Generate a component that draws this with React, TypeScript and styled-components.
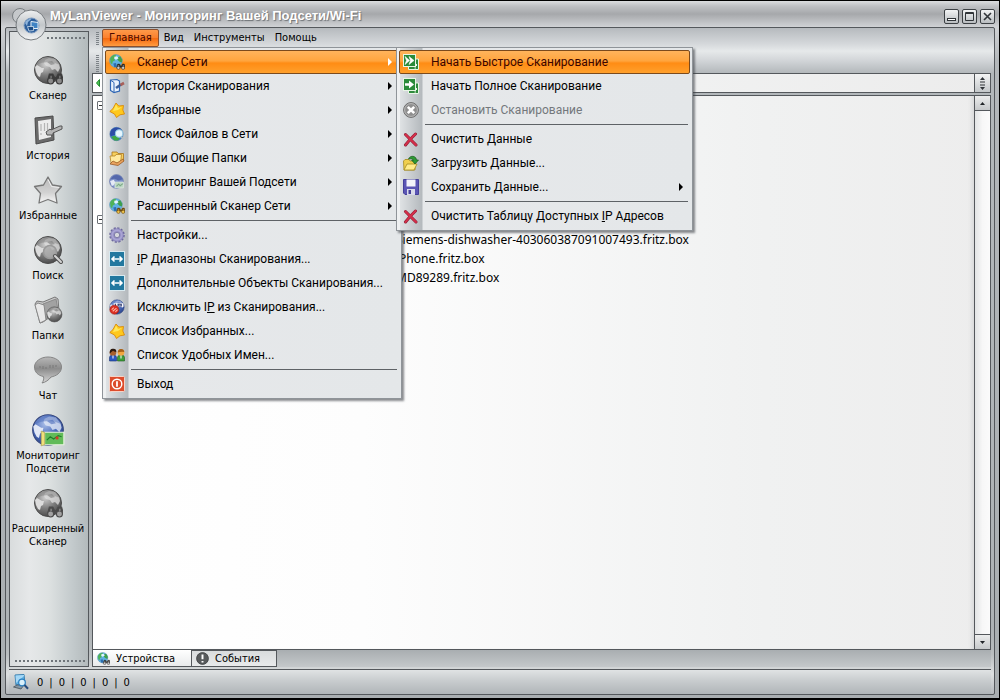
import React, { ReactNode } from 'react';
import styled, { createGlobalStyle, css } from 'styled-components';

const tahoma = `'DejaVu Sans Condensed', 'DejaVu Sans', sans-serif`;
const segoe = `Roboto, 'Noto Sans', sans-serif`;
const line = '#54585c';

const GlobalStyle = createGlobalStyle`
  * { box-sizing: border-box; }
  body { margin: 0; background: #000; font-family: ${tahoma}; font-size: 11px; color: #000; }
  button, input { font: inherit; color: inherit; margin: 0; }
  ul { list-style: none; margin: 0; padding: 0; }
  svg { display: block; flex: none; }
`;

/* ---------- window frame ---------- */

const Window = styled.div`
  display: flex;
  flex-direction: column;
  min-height: 100vh;
  border: 1px solid #000;
  border-bottom-width: 2px;
  padding: 0 4px 3px;
  background: linear-gradient(#dcdee0 0, #bfc1c4 5px, #a6a8ab 13px, #d0d2d5 26px, #b4b8bb 60px, #a9aeb1 100%);
`;

const TitleBar = styled.header`
  position: relative;
  display: flex;
  align-items: center;
  height: 26px;
  padding: 4px 0 0 45px;
`;

const Title = styled.h1`
  flex: 1;
  margin: 0;
  font: bold 13px/20px 'Liberation Sans', Arial, sans-serif;
  color: #fff;
  text-shadow: 1px 1px 1px #6d7175;
`;

const Logo = styled.svg`
  position: absolute;
  left: 1px;
  top: 4px;
  z-index: 2;
`;

const WindowButtons = styled.div`
  display: flex;
  gap: 3px;
`;

const WindowButton = styled.button`
  width: 15px;
  height: 15px;
  padding: 0;
  border: 1px solid #3c4044;
  border-radius: 2px;
  background: linear-gradient(#f2f3f4, #b9bdc0);
`;

const Frame = styled.div`
  flex: 1;
  display: flex;
  flex-direction: column;
  padding: 0 3px;
  border: 1px solid ${line};
  border-radius: 2px;
  background: linear-gradient(#b6babe 0, #d5d8db 16px, #e6e9ea 23px, #d3d6d9 32px, #b3b8bb 45px, #adb2b5 90%, #b9bdbf 94%, #dde0e1 97%, #b4b8bc 100%);
`;

const Body = styled.div`
  flex: 1;
  display: flex;
  gap: 3px;
`;

/* ---------- sidebar ---------- */

const Sidebar = styled.nav`
  display: flex;
  flex-direction: column;
  width: 80px;
  margin: 3px 0 2px;
  padding: 5px 2px 4px 5px;
  border: 1px solid ${line};
  background: linear-gradient(90deg, #d9dcdd, #e6e8e9 25%, #dde1e1 50%, #c3cacc 80%, #b3babc);
`;

const Dots = styled.div<{ $inset?: boolean }>`
  height: 2px;
  margin-left: ${p => (p.$inset ? '32px' : '0')};
  background: repeating-linear-gradient(90deg, #6f757a 0 2px, transparent 2px 4px);
`;

const SideList = styled.ul`
  flex: 1;
  margin: 13px 0 0 -5px;
`;

const SideButton = styled.button`
  display: flex;
  flex-direction: column;
  align-items: center;
  gap: 4px;
  width: 100%;
  padding: 3px 0 10px;
  border: 0;
  background: none;
  line-height: 13px;
  white-space: pre;
`;

const SideIcon = styled.span`
  display: flex;
  align-items: center;
  justify-content: center;
  width: 30px;
  height: 30px;
`;

/* ---------- main area ---------- */

const Main = styled.main`
  flex: 1;
  min-width: 0;
  display: flex;
  flex-direction: column;
  padding-bottom: 2px;
`;

const MenuBar = styled.div`
  display: flex;
  align-items: flex-start;
  height: 22px;
  padding: 1px 0 0 4px;
`;

const Toolbar = styled.div`
  height: 23px;
  padding: 2px 0 0 4px;
`;

const Grip = styled.span<{ $tall?: boolean }>`
  width: 3px;
  display: block;
  height: ${p => (p.$tall ? '18px' : '14px')};
  margin: 3px 3px 0 0;
  background: repeating-linear-gradient(#7c8287 0 1px, transparent 1px 2px);
`;

const MenuAnchor = styled.div`
  position: relative;
`;

const BarButton = styled.button<{ $open?: boolean }>`
  height: 18px;
  padding: 0 4px;
  border: 1px solid transparent;
  border-radius: 2px;
  background: none;
  line-height: 16px;
  ${p =>
    p.$open &&
    css`
      padding: 0 6px;
      border-color: #8a5030;
      color: #4a0800;
      background: linear-gradient(#ff9a4a, #fb7f2c 50%, #f56a10 52%, #ff9b40);
    `}
`;

const Menu = styled.ul<{ $sub?: boolean }>`
  position: absolute;
  z-index: ${p => (p.$sub ? 4 : 3)};
  left: ${p => (p.$sub ? '291px' : '0')};
  top: ${p => (p.$sub ? '-3px' : '18px')};
  width: ${p => (p.$sub ? '297px' : '300px')};
  padding: 2px;
  border: 1px solid #8f9499;
  background: linear-gradient(90deg, #eef0f1 0 3px, #dfe2e4 3px, #b4b9bd 25px, #e6e8ea 26px, #e4e7e9);
  box-shadow: 2px 2px 2px rgba(60, 64, 68, 0.6);
`;

const MenuRow = styled.li`
  position: relative;
`;

const MenuButton = styled.button<{ $active?: boolean }>`
  display: flex;
  align-items: center;
  gap: 12px;
  width: 100%;
  height: 24px;
  padding: 0 6px 0 3px;
  border: 1px solid transparent;
  border-radius: 2px;
  background: none;
  font-family: ${segoe};
  font-size: 12px;
  line-height: 22px;
  text-align: left;
  white-space: nowrap;
  &:disabled { color: #74787c; }
  ${p =>
    p.$active &&
    css`
      border-color: #7b4a1c;
      color: #3a0500;
      background: linear-gradient(#ffb45c, #ffa53e 45%, #ff8c14 55%, #ffa02c);
    `}
`;

const MenuText = styled.span`
  flex: 1;
`;

const Separator = styled.li`
  height: 5px;
  margin: 0 2px 0 26px;
  background: linear-gradient(transparent 2px, #5e6266 2px 3px, transparent 3px);
`;

const Address = styled.div`
  display: flex;
  height: 20px;
  margin-bottom: 2px;
  border: 1px solid ${line};
  background: linear-gradient(90deg, #fff, #f1f2f2 60%, #ececec);
`;

const AddressInput = styled.input`
  flex: 1;
  min-width: 0;
  border: 0;
  background: none;
  outline: none;
`;

const BarTool = styled.button<{ $wide?: boolean }>`
  display: flex;
  align-items: center;
  justify-content: center;
  width: ${p => (p.$wide ? '16px' : '9px')};
  padding: 0;
  border: 0;
  background: none;
  ${p => p.$wide && `border-left: 1px solid ${line}; background: linear-gradient(#f4f5f5, #c4c8ca);`}
`;

const ViewRow = styled.div`
  flex: 1;
  display: flex;
  border: 1px solid ${line};
  background: linear-gradient(90deg, #fff, #fdfdfd 30%, #f0f1f1 75%, #ededed);
`;

const Tree = styled.ul`
  flex: 1;
  min-width: 0;
  overflow: hidden;
  padding-left: 4px;
  box-shadow: inset -5px 0 4px -3px #d4d6d7;
`;

const TreeRow = styled.li<{ $child?: boolean }>`
  display: flex;
  align-items: center;
  height: 19px;
  padding: ${p => (p.$child ? '2px 0 0 299px' : '0')};
  white-space: nowrap;
  font-family: 'Noto Sans', 'Open Sans', sans-serif;
  font-size: 12px;
`;

const Expander = styled.button`
  width: 9px;
  height: 9px;
  padding: 0;
  border: 1px solid #6b7075;
  border-radius: 1px;
  background: linear-gradient(#333, #333) center / 5px 1px no-repeat, #fff;
`;

const ScrollBar = styled.div`
  display: flex;
  flex-direction: column;
  justify-content: space-between;
  width: 16px;
  border-left: 1px solid ${line};
  background: linear-gradient(90deg, #e2e4e5, #f7f7f7 50%, #fbfbfb);
`;

const ScrollButton = styled.button<{ $down?: boolean }>`
  display: flex;
  align-items: center;
  justify-content: center;
  height: 15px;
  padding: 0;
  border: 0 solid ${line};
  border-width: ${p => (p.$down ? '1px 0 0' : '0 0 1px')};
  background: linear-gradient(#eceded, #c6c9cb);
`;

const Tabs = styled.div`
  display: flex;
  height: 17px;
  background: linear-gradient(#a9aeb1, #c4c8ca);
`;

const Tab = styled.button<{ $active?: boolean }>`
  display: flex;
  align-items: center;
  gap: 6px;
  width: ${p => (p.$active ? '100px' : '86px')};
  padding: 0 4px;
  border: 1px solid ${line};
  border-top-width: ${p => (p.$active ? '0' : '1px')};
  margin-left: ${p => (p.$active ? '0' : '-1px')};
  background: ${p => (p.$active ? 'linear-gradient(#fff, #e9ebec)' : 'linear-gradient(#d9dcdd, #e8eaeb)')};
  line-height: 15px;
`;

const StatusBar = styled.footer`
  display: flex;
  align-items: center;
  gap: 8px;
  height: 25px;
  padding: 0 4px;
  border-top: 1px solid ${line};
  background: linear-gradient(#e0e3e4, #c8ccce 45%, #b0b5b8);
`;

const Counters = styled.span`
  display: flex;
  gap: 6px;
`;

/* ---------- icons ---------- */

type Tone = 'gray' | 'color' | 'blue';
const tones: Record<Tone, { hi: string; sea: string; deep: string; land: string; edge: string }> = {
  gray: { hi: '#cfcfcf', sea: '#7c7c7c', deep: '#3e3e3e', land: '#dcdcdc', edge: '#4c4c4c' },
  color: { hi: '#c4e8fb', sea: '#4da3dc', deep: '#2560a4', land: '#52b455', edge: '#5a93ae' },
  blue: { hi: '#a9bde8', sea: '#4c6cba', deep: '#223a80', land: '#e2e8f6', edge: '#34457c' },
};

const Globe = ({ tone, id }: { tone: Tone; id: string }) => {
  const t = tones[tone];
  return (
    <>
      <defs>
        <radialGradient id={id} cx="0.4" cy="0.3" r="0.8">
          <stop offset="0" stopColor={t.hi} />
          <stop offset="0.5" stopColor={t.sea} />
          <stop offset="1" stopColor={t.deep} />
        </radialGradient>
      </defs>
      <circle cx="15" cy="15" r="13.5" fill={`url(#${id})`} stroke={t.edge} />
      <path d="M2 12 L4 10 9 13 11 13 10 17 8 18 7 22 5 21 3 17Z" fill={t.land} />
      <path d="M12 5 L16 3 22 4 26 9 27 13 25 17 22 14 19 15 17 12 13 11 11 8Z" fill={t.land} opacity="0.8" />
      <path d="M14 7 L19 6 22 9 18 10Z" fill={t.sea} opacity="0.6" />
      <path d="M3 10 Q8 2 16 2 Q24 3 27 10 Q15 4 3 10Z" fill={t.sea} opacity="0.45" />
    </>
  );
};

/* Small menu-size globe: fewer, larger land masses so that it reads at 16px. */
const MiniGlobe = () => (
  <>
    <circle cx="13" cy="13" r="12" fill="#5fb0e2" stroke="#5a93ae" />
    <path d="M2 9 Q5 2 12 1.500 L14 5 L10 8 L11 12 L7 14 L6 19 L3 17Z" fill="#4fb257" />
    <path d="M16 6 L21 4 L25 11 L24 16 L19 14 L16 11Z" fill="#3f9f4b" />
    <path d="M8 18 L13 17 L15 24 L10 25Z" fill="#2e6db0" />
    <path d="M10 5 L15 4 L18 8 L13 11 L10 9Z" fill="#e2f5ff" />
  </>
);

const Binoculars = ({ a = '#2b2b2b', b = '#c9c9c9' }: { a?: string; b?: string }) => (
  <g stroke={a} strokeWidth="1.2" transform="translate(4 4) scale(0.880)">
    <path d="M14 17 h4 l2 4 h2 l2 -4 h4 l2 8 h-7 l-1 -2 h-2 l-1 2 h-7Z" fill={a} />
    <circle cx="15.5" cy="25" r="3.4" fill={b} />
    <circle cx="25.5" cy="25" r="3.4" fill={b} />
    <path d="M16 19 v3 M26 19 v3" stroke={b} />
  </g>
);

const Svg = ({ size = 16, box = 30, children }: { size?: number; box?: number; children: ReactNode }) => (
  <svg width={size} height={size} viewBox={`0 0 ${box} ${box}`} aria-hidden="true">
    {children}
  </svg>
);

const GlobeScan = ({ id, size, tone = 'color', a, b }: { id: string; size?: number; tone?: Tone; a?: string; b?: string }) => (
  <Svg size={size}>
    {tone === 'color' ? <MiniGlobe /> : <Globe tone={tone} id={id} />}
    <Binoculars a={a} b={b} />
  </Svg>
);

const SideHistory = () => (
  <Svg size={30}>
    <path d="M2 3 L20 1 L21 25 L3 29Z" fill="#6a6a6a" stroke="#4a4a4a" />
    <path d="M5 6 L18 4 L18 22 L6 25Z" fill="#ececec" />
    <path d="M8 9v7M8 18v2M11.500 8v8M14.500 8v7" stroke="#b4b4b4" fill="none" strokeWidth="1.200" />
    <path d="M13 17 L17 14 18 15 27 11 29 11 29 14 20 18 20 20 14 20Z" fill="#b5b5b5" stroke="#555" />
  </Svg>
);

const SideStar = () => (
  <Svg size={30}>
    <defs>
      <linearGradient id="star" x2="0" y2="1">
        <stop stopColor="#b8b8b8" />
        <stop offset="0.6" stopColor="#d2d2d2" />
        <stop offset="1" stopColor="#f7f7f7" />
      </linearGradient>
    </defs>
    <path d="M15 2 L19.500 10 L28.500 11.500 L22.500 18.500 L24 28 L15 24.500 L6 28 L7.500 18.500 L1.500 11.500 L10.500 10Z" fill="url(#star)" stroke="#777" strokeWidth="1.300" strokeLinejoin="round" />
    <path d="M15 4.500 L18.500 11.500 L26 12.500" fill="none" stroke="#eee" />
  </Svg>
);

const SideSearch = () => (
  <Svg size={30}>
    <Globe tone="gray" id="g-search" />
    <circle cx="17" cy="17" r="6.5" fill="#b2b2b2" fillOpacity="0.8" stroke="#999" strokeWidth="1.5" />
    <path d="M22 21 L28 27" stroke="#555" strokeWidth="4" strokeLinecap="round" />
    <path d="M22 21 L28 27" stroke="#d5d5d5" strokeWidth="2" strokeLinecap="round" />
  </Svg>
);

const SideFolders = () => (
  <Svg size={30}>
    <path d="M2 9 L4 6 L10 7 L22 2 L25 4 L26 16 L10 27 L7 28Z" fill="#c9c9c9" stroke="#777" />
    <path d="M10 9 L23 4 L25 15 L13 24Z" fill="#a2a2a2" stroke="#8a8a8a" />
    <path d="M2 10 L5 8 L11 10 L13 25 L7 28Z" fill="#e8e8e8" stroke="#888" />
    <g transform="translate(13 11) scale(0.56)">
      <Globe tone="gray" id="g-folder" />
    </g>
  </Svg>
);

const SideChat = () => (
  <Svg size={30}>
    <defs>
      <linearGradient id="chat" x2="0" y2="1">
        <stop stopColor="#b8b8b8" />
        <stop offset="0.45" stopColor="#8c8c8c" />
        <stop offset="1" stopColor="#d6d6d6" />
      </linearGradient>
    </defs>
    <path d="M15 2 C22.500 2 28.500 6.500 28.500 12 C28.500 18 23 21 18 22 C16 25 12 27.500 9 28 C10.500 26 11 24 10.500 21.500 C5 20.500 1.500 17 1.500 12 C1.500 6.500 7.500 2 15 2Z" fill="url(#chat)" stroke="#858585" />
    <path d="M7 11v2M10 11v3M13 12v2M17 10v3M20 10v3M23 10v2" stroke="#7b7b7b" strokeWidth="1.100" />
  </Svg>
);

const SideMonitor = () => (
  <Svg size={34}>
    <Globe tone="blue" id="g-monitor" />
    <path d="M12 17 h17 v11 h-17Z" fill="#62bb59" stroke="#e6f3dc" />
    <path d="M14 24 l3 -3 3 2 4 -3 3 1" stroke="#1f7d2b" fill="none" />
    <circle cx="23" cy="22" r="1.400" fill="#d43a2a" />
    <path d="M9 16 l3 1 v11 l-3 1Z" fill="#f0e07a" stroke="#9d9140" strokeWidth="0.500" />
  </Svg>
);

const HistoryIcon = () => (
  <Svg box={16}>
    <path d="M1.500 2 L8 1.500 L10.500 3 V13 L5 14.500 L1.500 12.500Z" fill="#eaf3fc" stroke="#2f66b4" strokeWidth="1.200" />
    <path d="M2 2.500 L5 4.500 V14" fill="none" stroke="#2f66b4" />
    <path d="M7 10 L12 6.500" stroke="#3a5f9a" strokeWidth="2.600" />
    <path d="M11.500 7 L15 5" stroke="#a8605a" strokeWidth="2.600" />
  </Svg>
);

const StarIcon = () => (
  <Svg box={16}>
    <path d="M7 1 L9.800 4 L14.500 3.500 L13.800 8 L15.500 12 L11 12.800 L7.500 15.500 L5.500 12 L0.800 9.500 L4 6.500Z" fill="#ffc81c" stroke="#d98a08" strokeWidth="0.900" strokeLinejoin="round" />
    <path d="M7 2.500 L9 6 L13 5 L9 8 L4 9Z" fill="#ffe75a" />
  </Svg>
);

const SearchGlobe = () => (
  <Svg>
    <circle cx="14" cy="15" r="12.500" fill="#3f86cc" stroke="#4a6fa0" />
    <path d="M3 10 Q7 3 14 3 Q20 3 24 6 L13 9 L11 17 L3 19 Q1 15 3 10Z" fill="#2d4da6" />
    <path d="M4 20 L12 18 L20 23 L17 27 L10 27Z" fill="#3fa844" />
    <circle cx="19" cy="14" r="7" fill="#e6f6fd" stroke="#8fc4e0" strokeWidth="2" />
    <path d="M23 20 L27 25" stroke="#b5bcc2" strokeWidth="3" />
  </Svg>
);

const FoldersIcon = () => (
  <Svg box={16}>
    <path d="M3 2 H8 L9 3.500 H14.500 V11 H3Z" fill="#f6cf5e" stroke="#a8741c" strokeWidth="0.800" />
    <path d="M1 6 H6 L7 4.500 H12.500 L11.500 13 H2Z" fill="#ffe9a0" stroke="#b88526" strokeWidth="0.800" />
    <path d="M1 14 L4 11 L8 13 L14 9 L15 11 L9 15.500Z" fill="#e9a35e" stroke="#90511d" strokeWidth="0.700" />
  </Svg>
);

const MonitorIcon = () => (
  <Svg>
    <circle cx="14" cy="14" r="13" fill="#7c90c8" stroke="#5a6aa0" />
    <path d="M3 10 Q7 2 15 2 Q22 3 26 10 L18 12 L10 9Z" fill="#5468ac" />
    <path d="M2 13 L9 11 L12 16 L8 22 L5 22Z" fill="#e4e9f6" />
    <path d="M11 15 h16 v11 h-16Z" fill="#bcd6c4" stroke="#eef6ea" />
    <path d="M14 23 l4 -4 3 3 5 -4" stroke="#7cab86" fill="none" strokeWidth="2" />
  </Svg>
);

const GearIcon = () => (
  <Svg box={16}>
    <circle cx="8" cy="8" r="6.600" fill="none" stroke="#6d689c" strokeWidth="2.400" strokeDasharray="2.100 1.360" />
    <circle cx="8" cy="8" r="4.700" fill="none" stroke="#8f8abf" strokeWidth="4" />
    <circle cx="8" cy="8" r="4.700" fill="none" stroke="#a9a4d4" strokeWidth="2" />
    <circle cx="8" cy="8" r="2.700" fill="#d5d7dc" stroke="#6d689c" strokeWidth="0.800" />
  </Svg>
);

const RangeIcon = () => (
  <Svg box={16}>
    <rect x="0.500" y="0.500" width="15" height="15" fill="#23789f" stroke="#d8e9ef" />
    <path d="M3 8 H13 M5.500 5.500 L3 8 L5.500 10.500 M10.500 5.500 L13 8 L10.500 10.500" fill="none" stroke="#fff" strokeWidth="1.600" />
  </Svg>
);

const ExcludeIcon = () => (
  <Svg>
    <Globe tone="blue" id="m-exclude" />
    <path d="M9 8 H27 V15 H9Z" fill="#f4f5fa" />
    <path d="M12 9 v5 M17 14 v-4 h6 v3 h-5" stroke="#303c70" strokeWidth="2" fill="none" />
    <circle cx="10" cy="20" r="8.500" fill="#dc2f22" stroke="#97160e" />
    <path d="M5 20 L9 16 M7 23 L14 17 M12 24 L16 20" stroke="#ffb7a8" strokeWidth="2" />
  </Svg>
);

const PeopleIcon = () => (
  <Svg box={16}>
    <path d="M0.500 14 V10.500 Q0.500 8 4 8 Q7.500 8 7.500 10.500 V14Z" fill="#2b57c0" stroke="#1a3272" strokeWidth="0.600" />
    <path d="M8.500 14 V10.500 Q8.500 8 12 8 Q15.500 8 15.500 10.500 V14Z" fill="#3e9e3a" stroke="#1d5a1c" strokeWidth="0.600" />
    <circle cx="4" cy="5.500" r="3.300" fill="#a9602c" />
    <path d="M0.700 6.500 Q0.500 1.500 4 1.800 Q7.500 1.500 7.300 5 Q5 4.500 4 3.800 Q2.500 5 0.700 6.500" fill="#2b1a10" />
    <circle cx="12" cy="5.500" r="3.300" fill="#f2a640" />
    <path d="M8.700 5.500 Q9 1.800 12 2 Q15 1.800 15.300 5 Q12 4.500 8.700 5.500" fill="#a5601a" />
    <path d="M4 8.500v3M12 8.500v3" stroke="#fff" />
  </Svg>
);

const ExitIcon = () => (
  <Svg box={16}>
    <rect x="0.500" y="0.500" width="15" height="15" rx="1" fill="#dd4c2c" stroke="#f6d2c6" />
    <circle cx="8" cy="8" r="4.800" fill="none" stroke="#fff" strokeWidth="1.400" />
    <path d="M8 5.200v5.600" stroke="#fff" strokeWidth="1.800" />
  </Svg>
);

const StartIcon = ({ fast }: { fast?: boolean }) => (
  <Svg box={16}>
    <path d="M13 5 H15.500 V15.500 H5.500 V13" fill="#2f8b3d" stroke="#e8f6e6" />
    <path d="M13 14 h-1.500 M13.500 12 v-2" stroke="#e8f6e6" />
    <rect x="0.500" y="0.500" width="12" height="12" fill="#2a8b3a" stroke="#e8f6e6" />
    {fast ? (
      <path d="M2 2.500 L6.500 6.500 L2 10.500 L3.500 6.500Z M6 2.500 L11 6.500 L6 10.500 L7.500 6.500Z" fill="#fff" stroke="#fff" strokeWidth="0.600" />
    ) : (
      <path d="M2 5.300 H6 V2.500 L11 6.500 L6 10.500 V7.700 H2Z" fill="#fff" />
    )}
  </Svg>
);

const StopIcon = () => (
  <Svg box={16}>
    <circle cx="8" cy="8" r="7.400" fill="#8f8f8f" stroke="#6f6f6f" />
    <circle cx="8" cy="8" r="6.400" fill="none" stroke="#c4c4c4" strokeWidth="0.800" />
    <path d="M4.800 4.800 L11.200 11.200 M11.200 4.800 L4.800 11.200" stroke="#fff" strokeWidth="2.600" />
  </Svg>
);

const ClearIcon = () => (
  <Svg box={16}>
    <path d="M2.500 3.500 L13 14 M12.500 3 Q7 8 2.500 14" fill="none" stroke="#8a1d33" strokeWidth="3" strokeLinecap="round" />
    <path d="M2.500 3.500 L13 14 M12.500 3 Q7 8 2.500 14" fill="none" stroke="#d42f4a" strokeWidth="2" strokeLinecap="round" />
  </Svg>
);

const LoadIcon = () => (
  <Svg box={16}>
    <path d="M0.500 6 L2 4.500 H6 L7 6 H12 V15 H1Z" fill="#f0cf4e" stroke="#a58a1c" strokeWidth="0.800" />
    <path d="M1 15 L4 9 H14 L11 15Z" fill="#ffec8a" stroke="#a58a1c" strokeWidth="0.800" />
    <path d="M5.500 4 Q7 0.500 11 1.500 Q13.500 2.500 13.500 5 H15.500 L12 9 L8.500 5 H10.500 Q9.500 3 5.500 4Z" fill="#2f9a34" stroke="#155a1a" strokeWidth="0.700" />
  </Svg>
);

const SaveIcon = () => (
  <Svg box={16}>
    <path d="M0.500 0.500 H15.500 V15.500 H2 L0.500 14Z" fill="#5a55b4" stroke="#45409a" />
    <rect x="3.500" y="0.500" width="9" height="7" fill="#f3f3fa" />
    <rect x="4" y="10" width="8" height="6" fill="#d9daea" />
    <rect x="5.500" y="11" width="2.500" height="4" fill="#45409a" />
  </Svg>
);

const AlertIcon = () => (
  <Svg size={13} box={16}>
    <circle cx="8" cy="8" r="7.300" fill="#575a5c" stroke="#3e4042" />
    <path d="M8 3v6M8 11v2" stroke="#fff" strokeWidth="2.400" />
  </Svg>
);

const StatusIcon = () => (
  <Svg box={16}>
    <path d="M2 1 L11 0.500 L12 10 L3 11Z" fill="#5fb2e6" stroke="#3b7fae" />
    <path d="M3 9 L11 2 V1 L2.500 1.500Z" fill="#a5d8f6" />
    <path d="M0.500 13 L4 11 H11 L8 15Z" fill="#8496a3" stroke="#46525b" strokeWidth="0.800" />
    <circle cx="9" cy="8.500" r="3.300" fill="#d9f1fc" stroke="#2a7fc0" strokeWidth="1.200" />
    <path d="M11.500 11 L15 14.800" stroke="#274b7a" strokeWidth="2" />
  </Svg>
);

const SubArrow = ({ light }: { light?: boolean }) => (
  <svg width="4" height="8" viewBox="0 0 4 8" aria-hidden="true">
    <path d="M0 0 L4 4 L0 8Z" fill={light ? '#fff' : '#000'} />
  </svg>
);

/* ---------- data ---------- */

type Entry = { icon: ReactNode; text: ReactNode; more?: boolean; disabled?: boolean; sub?: (Entry | null)[] };

const scanMenu: (Entry | null)[] = [
  { icon: <StartIcon fast />, text: 'Начать Быстрое Сканирование' },
  { icon: <StartIcon />, text: 'Начать Полное Сканирование' },
  { icon: <StopIcon />, text: 'Остановить Сканирование', disabled: true },
  null,
  { icon: <ClearIcon />, text: 'Очистить Данные' },
  { icon: <LoadIcon />, text: 'Загрузить Данные...' },
  { icon: <SaveIcon />, text: 'Сохранить Данные...', more: true },
  null,
  { icon: <ClearIcon />, text: <>Очистить Таблицу Доступных <u>I</u>P Адресов</> },
];

const mainMenu: (Entry | null)[] = [
  { icon: <GlobeScan id="m-scan" />, text: 'Сканер Сети', more: true, sub: scanMenu },
  { icon: <HistoryIcon />, text: 'История Сканирования', more: true },
  { icon: <StarIcon />, text: 'Избранные', more: true },
  { icon: <SearchGlobe />, text: 'Поиск Файлов в Сети', more: true },
  { icon: <FoldersIcon />, text: 'Ваши Общие Папки', more: true },
  { icon: <MonitorIcon />, text: 'Мониторинг Вашей Подсети', more: true },
  { icon: <GlobeScan id="m-ext" a="#6b4a10" b="#f0c54a" />, text: 'Расширенный Сканер Сети', more: true },
  null,
  { icon: <GearIcon />, text: 'Настройки...' },
  { icon: <RangeIcon />, text: <><u>I</u>P Диапазоны Сканирования...</> },
  { icon: <RangeIcon />, text: 'Дополнительные Объекты Сканирования...' },
  { icon: <ExcludeIcon />, text: <>Исключить I<u>P</u> из Сканирования...</> },
  { icon: <StarIcon />, text: 'Список Избранных...' },
  { icon: <PeopleIcon />, text: 'Список Удобных Имен...' },
  null,
  { icon: <ExitIcon />, text: 'Выход' },
];

const sideItems: { icon: ReactNode; text: string }[] = [
  { icon: <GlobeScan id="s-scan" size={30} tone="gray" a="#3c3c3c" b="#8a8a8a" />, text: 'Сканер' },
  { icon: <SideHistory />, text: 'История' },
  { icon: <SideStar />, text: 'Избранные' },
  { icon: <SideSearch />, text: 'Поиск' },
  { icon: <SideFolders />, text: 'Папки' },
  { icon: <SideChat />, text: 'Чат' },
  { icon: <SideMonitor />, text: 'Мониторинг\nПодсети' },
  { icon: <GlobeScan id="s-ext" size={30} tone="gray" a="#4c4c4c" b="#a2a2a2" />, text: 'Расширенный\nСканер' },
];

const hosts = ['Siemens-dishwasher-403060387091007493.fritz.box', 'iPhone.fritz.box', 'MD89289.fritz.box'];

const MenuList = ({ entries, sub }: { entries: (Entry | null)[]; sub?: boolean }) => (
  <Menu $sub={sub} role="menu">
    {entries.map((e, i) =>
      e ? (
        <MenuRow key={i} role="none">
          <MenuButton role="menuitem" $active={i === 0} disabled={e.disabled}>
            {e.icon}
            <MenuText>{e.text}</MenuText>
            {e.more && <SubArrow light={i === 0} />}
          </MenuButton>
          {e.sub && <MenuList entries={e.sub} sub />}
        </MenuRow>
      ) : (
        <Separator key={i} role="separator" />
      ),
    )}
  </Menu>
);

export default function App() {
  return (
    <Window>
      <GlobalStyle />
      <TitleBar>
        <Logo width="42" height="38" viewBox="0 0 42 38" aria-hidden="true">
          <defs>
            <linearGradient id="disc" x2="0" y2="1">
              <stop stopColor="#eef0f1" />
              <stop offset="0.500" stopColor="#c3c7ca" />
              <stop offset="1" stopColor="#f4f5f6" />
            </linearGradient>
          </defs>
          <circle cx="14" cy="11" r="7.500" fill="#c5c8cb" stroke="#777c80" />
          <circle cx="25" cy="20" r="15" fill="url(#disc)" stroke="#777c80" />
          <circle cx="25.500" cy="20.500" r="7.500" fill="#2d5f9c" stroke="#7f9cc0" />
          <path d="M19 18 Q21 13.500 26 13.500 L22 17 L21 21Z" fill="#8fb4da" />
          <path d="M25 16.500 L32 17.500 V23.500 H25Z" fill="#3f83c4" stroke="#e4eef6" />
          <path d="M21.500 21.500 H27.500 V25.500 L23 26Z" fill="#1c4c86" stroke="#cfdfee" strokeWidth="0.800" />
        </Logo>
        <Title>MyLanViewer - Мониторинг Вашей Подсети/Wi-Fi</Title>
        <WindowButtons>
          <WindowButton aria-label="Свернуть">
            <svg width="13" height="13" viewBox="0 0 13 13"><rect x="2.500" y="8.500" width="8" height="2" fill="#fff" stroke="#303438" /></svg>
          </WindowButton>
          <WindowButton aria-label="Развернуть">
            <svg width="13" height="13" viewBox="0 0 13 13"><path d="M2.500 2.500h8v8h-8zM2.500 3.500h8" fill="none" stroke="#303438" /></svg>
          </WindowButton>
          <WindowButton aria-label="Закрыть">
            <svg width="13" height="13" viewBox="0 0 13 13"><path d="M3 3l7 7M10 3l-7 7" stroke="#303438" strokeWidth="1.600" /></svg>
          </WindowButton>
        </WindowButtons>
      </TitleBar>
      <Frame>
        <Body>
          <Sidebar>
            <Dots $inset />
            <SideList>
              {sideItems.map(s => (
                <li key={s.text}>
                  <SideButton>
                    <SideIcon>{s.icon}</SideIcon>
                    {s.text}
                  </SideButton>
                </li>
              ))}
            </SideList>
            <Dots />
          </Sidebar>
          <Main>
            <MenuBar>
              <Grip />
              <MenuAnchor>
                <BarButton $open>Главная</BarButton>
                <MenuList entries={mainMenu} />
              </MenuAnchor>
              <BarButton>Вид</BarButton>
              <BarButton>Инструменты</BarButton>
              <BarButton>Помощь</BarButton>
            </MenuBar>
            <Toolbar>
              <Grip $tall />
            </Toolbar>
            <Address>
              <BarTool aria-label="Назад">
                <svg width="4" height="8" viewBox="0 0 4 8"><path d="M3.500 0.500 L0.500 4 L3.500 7.500Z" fill="#4cc455" stroke="#1f8a2c" /></svg>
              </BarTool>
              <AddressInput aria-label="Адрес" />
              <BarTool $wide aria-label="Список">
                <svg width="5" height="13" viewBox="0 0 5 13">
                  <path d="M2.500 0 L5 3 H0Z M2.500 13 L5 10 H0Z M0 4.500h5v1H0z M0 7.500h5v1H0z" fill="#303438" />
                </svg>
              </BarTool>
            </Address>
            <ViewRow>
              <Tree>
                <TreeRow><Expander aria-label="Свернуть группу" /></TreeRow>
                {[1, 2, 3, 4, 5].map(n => <TreeRow key={n} />)}
                <TreeRow><Expander aria-label="Свернуть группу" /></TreeRow>
                {hosts.map(h => <TreeRow $child key={h}>{h}</TreeRow>)}
              </Tree>
              <ScrollBar>
                <ScrollButton aria-label="Вверх">
                  <svg width="5" height="3" viewBox="0 0 5 3"><path d="M2.500 0 L5 3 H0Z" fill="#202428" /></svg>
                </ScrollButton>
                <ScrollButton $down aria-label="Вниз">
                  <svg width="5" height="3" viewBox="0 0 5 3"><path d="M2.500 3 L5 0 H0Z" fill="#202428" /></svg>
                </ScrollButton>
              </ScrollBar>
            </ViewRow>
            <Tabs>
              <Tab $active><GlobeScan id="t-scan" size={13} />Устройства</Tab>
              <Tab><AlertIcon />События</Tab>
            </Tabs>
          </Main>
        </Body>
        <StatusBar>
          <StatusIcon />
          <Counters>
            <span>0</span><span>|</span><span>0</span><span>|</span><span>0</span><span>|</span><span>0</span><span>|</span><span>0</span>
          </Counters>
        </StatusBar>
      </Frame>
    </Window>
  );
}
